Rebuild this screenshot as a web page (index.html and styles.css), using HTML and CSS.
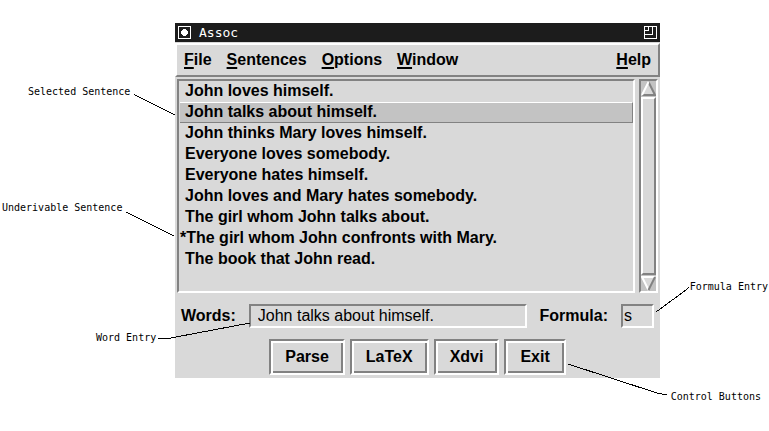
FILE: index.html
```html
<!DOCTYPE html>
<html lang="en">
<head>
    <meta charset="UTF-8">
    <meta name="viewport" content="width=device-width, initial-scale=1.0">
    <title>Assoc</title>
    <link rel="stylesheet" href="styles.css">
</head>
<body>
    <div class="figure">
        <main class="window">
            <header class="titlebar">
                <button type="button" class="title-button" aria-label="Window menu">
                    <svg width="13" height="13" viewBox="0 0 13 13" shape-rendering="crispEdges">
                        <path d="M0 0h13v13H0zM1 1v11h11V1z" fill="#fff" fill-rule="evenodd"/>
                        <path d="M5 3h3v1h1v1h1v3h-1v1h-1v1h-3v-1h-1v-1h-1v-3h1v-1h1z" fill="#fff"/>
                    </svg>
                </button>
                <h1>Assoc</h1>
                <button type="button" class="title-button" aria-label="Resize">
                    <svg width="13" height="13" viewBox="0 0 13 13" shape-rendering="crispEdges">
                        <path d="M0 0h13v13H0zM1 1v11h11V1z" fill="#fff" fill-rule="evenodd"/>
                        <path d="M8 1h1v8H1V8h7zM4 1h1v4H1V4h3z" fill="#fff"/>
                    </svg>
                </button>
            </header>

            <nav class="menubar">
                <button type="button"><u>F</u>ile</button>
                <button type="button"><u>S</u>entences</button>
                <button type="button"><u>O</u>ptions</button>
                <button type="button"><u>W</u>indow</button>
                <button type="button" class="help"><u>H</u>elp</button>
            </nav>

            <div class="browser">
                <ul class="sentences" role="listbox" aria-label="Sentences">
                    <li role="option">John loves himself.</li>
                    <li role="option" class="selected" aria-selected="true">John talks about himself.</li>
                    <li role="option">John thinks Mary loves himself.</li>
                    <li role="option">Everyone loves somebody.</li>
                    <li role="option">Everyone hates himself.</li>
                    <li role="option">John loves and Mary hates somebody.</li>
                    <li role="option">The girl whom John talks about.</li>
                    <li role="option" class="underivable">*The girl whom John confronts with Mary.</li>
                    <li role="option">The book that John read.</li>
                </ul>
                <div class="scrollbar">
                    <button type="button" aria-label="Scroll up">
                        <svg width="15" height="15" viewBox="0 0 15 15">
                            <path d="M7.5 0L15 15H0z" fill="#d9d9d9"/>
                            <path d="M7.5 1L14 14H1" fill="none" stroke="#828282" stroke-width="2"/>
                            <path d="M7.5 1L1 14" stroke="#fff" stroke-width="2"/>
                        </svg>
                    </button>
                    <div class="slider"></div>
                    <button type="button" aria-label="Scroll down">
                        <svg width="15" height="15" viewBox="0 0 15 15">
                            <path d="M0 0H15L7.5 15z" fill="#d9d9d9"/>
                            <path d="M14 1H1L7.5 14" fill="none" stroke="#fff" stroke-width="2"/>
                            <path d="M14 1L7.5 14" stroke="#828282" stroke-width="2"/>
                        </svg>
                    </button>
                </div>
            </div>

            <div class="entries">
                <label for="words">Words:</label>
                <input type="text" id="words" class="words" value="John talks about himself.">
                <label for="formula">Formula:</label>
                <input type="text" id="formula" class="formula" value="s">
            </div>

            <div class="controls">
                <button type="button">Parse</button>
                <button type="button">LaTeX</button>
                <button type="button">Xdvi</button>
                <button type="button">Exit</button>
            </div>
        </main>

        <!-- callouts, each side pinned to its own edge -->
        <svg class="lines lines-left" width="260" height="431" viewBox="0 0 260 431" shape-rendering="crispEdges">
            <path d="M134 94.5L175 115M126 212L174 236M158 338.5H168L250 323"/>
        </svg>
        <svg class="lines lines-right" width="209" height="431" viewBox="0 0 209 431" shape-rendering="crispEdges">
            <path d="M129 287L126 290L96 312M8 364L97 393L107 395"/>
        </svg>
        <span class="callout selected-note">Selected Sentence</span>
        <span class="callout underivable-note">Underivable Sentence</span>
        <span class="callout word-note">Word Entry</span>
        <span class="callout formula-note">Formula Entry</span>
        <span class="callout control-note">Control Buttons</span>
    </div>
</body>
</html>
```
FILE: styles.css
```css
body {
    margin: 0;
    background: #fff;
    color: #000;
    font-family: "Liberation Sans", Arial, sans-serif;
    font-size: 16px;
}
.figure {
    position: relative;
    padding: 23px 109px 53px 175px;
}
button {
    font: inherit;
    color: inherit;
    background: none;
    border: none;
    padding: 0;
    margin: 0;
}
svg {
    display: block;
}
.window {
    background: #d9d9d9;
    font-weight: bold;
    padding-bottom: 3px;
}

/* title bar */
.titlebar {
    display: flex;
    align-items: center;
    gap: 8px;
    height: 19px;
    padding: 0 3px;
    background: #1c1c1c;
    color: #fff;
}
.titlebar h1 {
    flex: 1;
    margin: 0;
    font: 13px "DejaVu Sans Mono", monospace;
}

/* menus */
.menubar {
    display: flex;
    gap: 15px;
    margin-top: 1px;
    padding: 5px 7px;
    border: 2px solid;
    border-color: #fff #828282 #828282 #fff;
    line-height: 20px;
}
.menubar u {
    text-decoration-thickness: 2px;
    text-underline-offset: 2px;
}
.menubar .help {
    margin-left: auto;
}

/* sentence list */
.browser {
    display: flex;
    gap: 4px;
    margin: 2px 2px 0;
}
.sentences {
    flex: 1;
    margin: 0;
    padding: 0 0 21px 1px;
    list-style: none;
    border: 2px solid;
    border-color: #828282 #fff #fff #828282;
}
.sentences li {
    height: 21px;
    line-height: 17px;
    padding: 0 5px;
    box-sizing: border-box;
    border: 1px solid transparent;
    border-left: none;
}
.sentences .selected {
    background: #c3c3c3;
    border-color: #fff #828282 #828282 #fff;
}
.sentences .underivable {
    padding-left: 0;
}
.scrollbar {
    display: flex;
    flex-direction: column;
    width: 15px;
    background: #c3c3c3;
    border: 2px solid;
    border-color: #828282 #fff #fff #828282;
}
.slider {
    flex: 1;
    margin: 1px 0;
    background: #d9d9d9;
    border: 2px solid;
    border-color: #fff #828282 #828282 #fff;
}

/* entries */
.entries {
    display: flex;
    align-items: center;
    gap: 13px;
    margin: 11px 6px 0;
}
.entries input {
    box-sizing: border-box;
    height: 24px;
    min-width: 0;
    padding: 0 7px;
    font: 16px "Liberation Sans", Arial, sans-serif;
    color: #000;
    background: #d9d9d9;
    border: 2px solid;
    border-color: #828282 #fff #fff #828282;
    border-radius: 0;
}
.entries .words {
    flex: 1;
}
.entries .formula {
    width: 33px;
    padding: 0 1px;
}

/* buttons */
.controls {
    display: flex;
    justify-content: center;
    gap: 5px;
    margin-top: 11px;
}
.controls button {
    height: 36px;
    padding: 0 14px;
    border: 2px solid;
    border-color: #828282 #fff #fff #828282;
    box-shadow: inset 2px 2px #fff, inset -2px -2px #828282;
}

/* callouts */
.lines {
    position: absolute;
    top: 0;
    pointer-events: none;
    fill: none;
    stroke: #000;
}
.lines-left {
    left: 0;
}
.lines-right {
    right: 0;
}
.callout {
    position: absolute;
    font: 10px/12px "DejaVu Sans Mono", monospace;
    white-space: nowrap;
}
.selected-note {
    left: 28px;
    top: 86px;
}
.underivable-note {
    left: 2px;
    top: 202px;
}
.word-note {
    left: 96px;
    top: 332px;
}
.formula-note {
    right: 1px;
    top: 281px;
}
.control-note {
    right: 8px;
    top: 391px;
}
```
